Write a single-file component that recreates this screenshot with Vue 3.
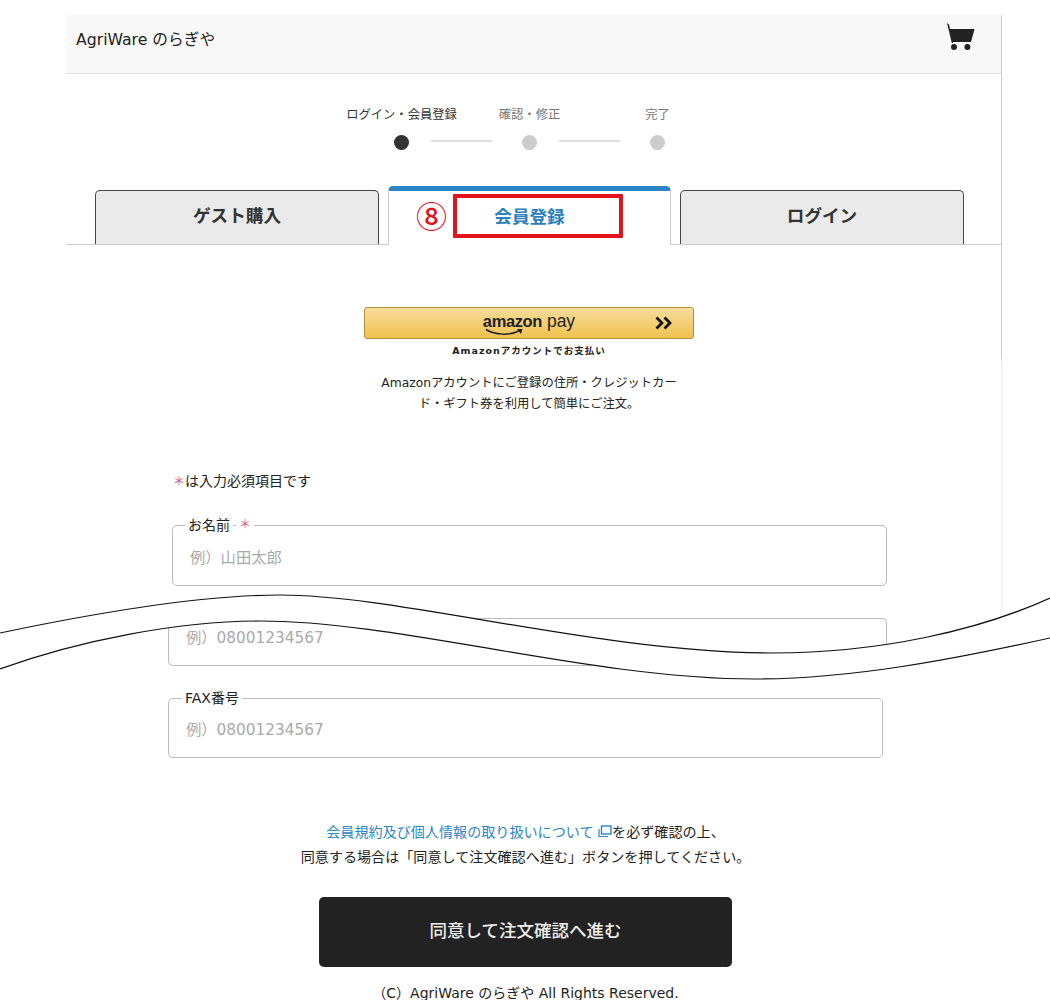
<script setup>
const steps = [
  { label: 'ログイン・会員登録', active: true },
  { label: '確認・修正', active: false },
  { label: '完了', active: false }
]
const tabs = [
  { label: 'ゲスト購入', active: false },
  { label: '会員登録', active: true },
  { label: 'ログイン', active: false }
]
</script>

<template>
  <div class="page">
    <div class="shop">
      <header class="head">
        <span class="brand">AgriWare のらぎや</span>
        <svg class="cart" width="30" height="30" viewBox="0 0 30 30" aria-label="カート">
          <path d="M1 1 L3 2.6 L7 21 L5.8 21 Z" fill="#222" />
          <path d="M3.4 7 H28.6 L25 20 H6.2 Z" fill="#222" />
          <circle cx="8" cy="25" r="3" fill="#222" />
          <circle cx="21.4" cy="25" r="3" fill="#222" />
        </svg>
      </header>

      <div class="steps">
        <div v-for="(s, i) in steps" :key="s.label" class="step" :class="{ on: s.active }">
          <span class="step-label">{{ s.label }}</span>
          <span class="step-track">
            <span class="dot"></span>
            <span v-if="i < 2" class="line"></span>
          </span>
        </div>
      </div>

      <nav class="tabs">
        <div v-for="t in tabs" :key="t.label" class="tab" :class="{ active: t.active }">
          {{ t.label }}
          <template v-if="t.active">
            <span class="anno-num">⑧</span>
            <span class="anno-box"></span>
          </template>
        </div>
      </nav>

      <section class="upper">
        <div class="amazon">
          <div class="amazon-btn">
            <span class="amazon-logo">
              <span class="az">amazon</span><span class="pay">pay</span>
              <svg class="smile" width="46" height="9" viewBox="0 0 46 9">
                <path d="M1 1.5 C10 7 24 8 35 2.5" fill="none" stroke="#222" stroke-width="1.5" />
                <path d="M32 1 L37.5 1 L36 6 Z" fill="#222" />
              </svg>
            </span>
            <svg class="chev" width="17" height="14" viewBox="0 0 17 14">
              <path d="M1.5 1.5 L7 7 L1.5 12.5 M9.5 1.5 L15 7 L9.5 12.5" fill="none" stroke="#111" stroke-width="2.8" />
            </svg>
          </div>
          <p class="amazon-cap">Amazonアカウントでお支払い</p>
          <p class="amazon-desc">Amazonアカウントにご登録の住所・クレジットカード・ギフト券を利用して簡単にご注文。</p>
        </div>

        <p class="req"><span class="star">＊</span>は入力必須項目です</p>

        <div class="field">
          <label class="flabel"><span>お名前</span><span class="star">＊</span></label>
          <input class="finput" placeholder="例）山田太郎" />
        </div>
      </section>

      <section class="cut">
        <div class="cut-top"></div>
        <div class="cut-bottom">
          <input class="finput" placeholder="例）08001234567" />
        </div>
      </section>

      <section class="lower">
        <div class="field">
          <label class="flabel"><span>FAX番号</span></label>
          <input class="finput" placeholder="例）08001234567" />
        </div>

        <p class="terms">
          <a class="link">会員規約及び個人情報の取り扱いについて
            <svg class="ext" width="14" height="13" viewBox="0 0 14 13">
              <rect x="3.5" y="1" width="9.5" height="8" fill="none" stroke="#2a86c6" stroke-width="1.4" />
              <path d="M1 4 V11.5 H10" fill="none" stroke="#2a86c6" stroke-width="1.2" />
            </svg></a>を必ず確認の上、<br />同意する場合は「同意して注文確認へ進む」ボタンを押してください。
        </p>

        <button class="submit">同意して注文確認へ進む</button>
      </section>

      <footer class="foot">（C）AgriWare のらぎや All Rights Reserved.</footer>
    </div>

    <svg class="wave" width="1050" height="100" viewBox="0 590 1050 100">
      <path d="M0 633 C100 612 200 595 280 595 C400 595 600 653 772 653 C880 653 980 630 1050 598 L1050 638 C950 660 850 679 755 679 C590 679 400 621 260 621 C180 621 80 640 0 669 Z" fill="#fff" />
      <path d="M0 633 C100 612 200 595 280 595 C400 595 600 653 772 653 C880 653 980 630 1050 598" fill="none" stroke="#111" stroke-width="1.2" />
      <path d="M0 669 C80 640 180 621 260 621 C400 621 590 679 755 679 C850 679 950 660 1050 638" fill="none" stroke="#111" stroke-width="1.2" />
    </svg>
  </div>
</template>

<style>
body { background: #fff; }
</style>

<style scoped>
.page {
  position: relative;
  height: 1000px;
  overflow: hidden;
  padding-top: 15px;
  box-sizing: border-box;
  font-family: "DejaVu Sans", "Noto Sans CJK JP", sans-serif;
  color: #222;
}
.shop {
  margin-left: 66px;
  width: 936px;
  box-sizing: border-box;
  border-right: 1px solid #ccc;
  border-image: linear-gradient(to bottom, #ccc 0, #ccc 338px, #efefef 352px, #efefef 100%) 1;
  height: 620px;
}
.head {
  height: 52px;
  background: #f8f8f8;
  border-bottom: 1px solid #ddd;
  display: flex;
  justify-content: space-between;
  padding: 6px 25px 0 10px;
}
.brand { font-size: 15.7px; line-height: 38px; }
.cart { margin-top: 1px; }

.steps {
  display: grid;
  grid-template-columns: repeat(3, 128px);
  justify-content: center;
  padding: 32px 8px 0 0;
  height: 80px;
}
.step { display: flex; flex-direction: column; align-items: center; color: #777; position: relative; }
.step.on { color: #333; }
.step-label { font-size: 12.3px; line-height: 18px; white-space: nowrap; }
.step-track { position: relative; margin-top: 11px; }
.dot { display: block; width: 15px; height: 15px; border-radius: 50%; background: #ccc; }
.on .dot { background: #333; }
.line {
  position: absolute;
  left: 37px;
  top: 5px;
  width: 61px;
  height: 2px;
  background: #ddd;
}

.tabs {
  display: flex;
  align-items: flex-end;
  gap: 10px;
  height: 58px;
  padding: 0 37px 0 29px;
  border-bottom: 1px solid #ccc;
}
.tab {
  position: relative;
  flex: 0 0 284px;
  box-sizing: border-box;
  height: 54px;
  padding-bottom: 6px;
  background: #eaeaea;
  border: 1px solid #444;
  border-bottom: 0;
  border-radius: 5px 5px 0 0;
  display: flex;
  align-items: center;
  justify-content: center;
  font-size: 17.6px;
  font-weight: 700;
  color: #333;
}
.tab.active {
  flex-basis: 283px;
  height: 59px;
  margin-left: -1px;
  margin-right: -1px;
  margin-bottom: -1px;
  background: #fff;
  border: 1px solid #ccc;
  border-top: 5px solid #2a86c6;
  border-bottom: 0;
  color: #2a7fbd;
}
.anno-num {
  position: absolute;
  left: 27px;
  top: 6px;
  font-size: 31px;
  line-height: 36px;
  color: #e2131c;
  font-weight: 500;
  font-family: "Noto Sans CJK JP", sans-serif;
}
.anno-box {
  position: absolute;
  left: 64px;
  top: 3px;
  width: 170px;
  height: 44px;
  box-sizing: border-box;
  border: 4px solid #e2131c;
  border-radius: 1px;
}

.upper { padding: 62px 9px 0 0; }
.amazon { width: 330px; margin: 0 auto; text-align: center; }
.amazon-btn {
  position: relative;
  height: 32px;
  box-sizing: border-box;
  border: 1px solid #b68f3a;
  border-radius: 3px;
  background: linear-gradient(#f7dc9b, #efc250);
  display: flex;
  justify-content: center;
}
.amazon-logo {
  position: relative;
  display: flex;
  gap: 5px;
  color: #222;
  font-family: "Liberation Sans", sans-serif;
  font-size: 16.5px;
  line-height: 27px;
}
.az { font-weight: 700; letter-spacing: -0.4px; }
.pay { font-size: 17.5px; }
.smile { position: absolute; left: 2px; top: 20px; }
.chev { position: absolute; right: 21px; top: 8px; }
.amazon-cap {
  margin: 5px 0 0;
  font-size: 9.5px;
  line-height: 13px;
  font-weight: 700;
  letter-spacing: 1px;
}
.amazon-desc {
  width: 300px;
  margin: 16px auto 0;
  font-size: 12.3px;
  line-height: 21px;
}
.req {
  margin: 55px 0 0 107px;
  font-size: 14px;
  line-height: 22px;
}
.star { color: #d4508c; font-size: 12px; }

.field {
  position: relative;
  box-sizing: border-box;
  height: 60px;
  border: 1px solid #bbb;
  border-radius: 5px;
  display: flex;
  align-items: center;
  padding-top: 4px;
}
.upper .field { width: 715px; height: 61px; margin: 32px 0 0 106px; }
.flabel {
  position: absolute;
  left: 12px;
  top: -10px;
  display: flex;
  gap: 3px;
  font-size: 14px;
  line-height: 18px;
  color: #222;
}
.flabel span { background: #fff; padding: 0 3px; }
.finput {
  width: 100%;
  border: 0;
  outline: 0;
  background: transparent;
  padding: 0 17px;
  font: inherit;
  font-size: 15.3px;
  color: #222;
}
.finput::placeholder { color: #aaa; opacity: 1; }

.cut {
  display: grid;
  height: 56px;
  margin-top: 24px;
}
.cut-top, .cut-bottom { grid-area: 1 / 1; box-sizing: border-box; }
.cut-top {
  margin: 8px 0 0 106px;
  width: 715px;
  height: 30px;
  border-top: 1px solid #bbb;
  border-right: 1px solid #bbb;
  border-top-right-radius: 5px;
}
.cut-bottom {
  margin-left: 102px;
  width: 715px;
  height: 56px;
  border-left: 1px solid #bbb;
  border-bottom: 1px solid #bbb;
  border-bottom-left-radius: 5px;
  display: flex;
  align-items: flex-end;
  padding-bottom: 18px;
}

.lower {
  padding: 32px 16px 0 0;
  width: 935px;
  box-sizing: border-box;
}
.lower .field { width: 715px; margin-left: 102px; }
.lower .flabel { left: 13px; }
.terms {
  margin: 62px 0 0;
  text-align: center;
  font-size: 14.1px;
  line-height: 25px;
}
.link { color: #2a86c6; }
.ext { vertical-align: -1px; }
.submit {
  display: block;
  width: 413px;
  height: 70px;
  margin: 27px auto 0;
  padding: 0 0 6px;
  border: 0;
  border-radius: 5px;
  background: #222;
  color: #eee;
  font: inherit;
  font-size: 17.5px;
  font-weight: 500;
}
.foot {
  padding-right: 16px;
  margin-top: 16px;
  text-align: center;
  font-size: 14px;
  line-height: 20px;
}

.wave {
  position: absolute;
  left: 0;
  top: 590px;
  display: block;
}
</style>
